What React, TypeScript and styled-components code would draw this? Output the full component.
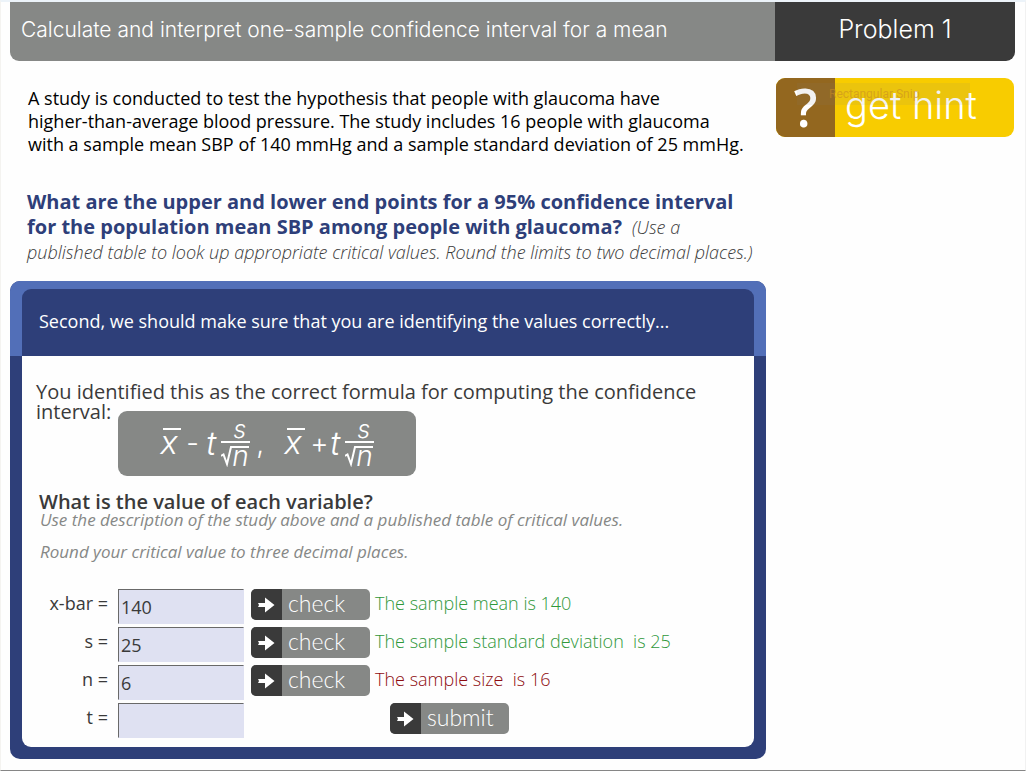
import React, { useState } from "react";
import styled, { createGlobalStyle } from "styled-components";

const GlobalStyle = createGlobalStyle`
  * { box-sizing: border-box; }
  body {
    margin: 0;
    background: #fefefe;
    font-family: "Open Sans", "Noto Sans", sans-serif;
    color: #3a3a3a;
  }
`;

const display = `"Inter", "Lato", sans-serif`;
const navy = "#2e3f79";
const grey = "#868886";
const charcoal = "#3a3a3a";

const Page = styled.main`
  border-top: 2px solid #ecf3f9;
  border-left: 1px solid #f4f3f0;
  border-right: 1px solid #f1f1f1;
  border-bottom: 1px solid #868686;
  padding: 0 10px 11px 9px;
`;

const Header = styled.header`
  display: flex;
  height: 59px;
  border-radius: 0 0 9px 9px;
  overflow: hidden;
  color: #fff;
  font-family: ${display};
  font-weight: 300;
  line-height: 55px;
`;

const Title = styled.h1`
  flex: 1;
  margin: 0;
  padding-left: 11px;
  background: ${grey};
  font-size: 21px;
  font-weight: 300;
  white-space: nowrap;
`;

const ProblemNumber = styled.div`
  width: 240px;
  background: ${charcoal};
  font-size: 25px;
  text-align: center;
`;

const Columns = styled.div`
  display: grid;
  grid-template-columns: 1fr 239px;
  column-gap: 10px;
  align-items: start;
  padding-top: 17px;
`;

const Study = styled.p`
  margin: 0;
  padding: 9px 0 0 18px;
  color: #000;
  font-size: 18px;
  line-height: 23px;
`;

const Question = styled.h2`
  margin: 33px 0 0;
  padding-left: 17px;
  color: ${navy};
  font-size: 20px;
  font-weight: 700;
  line-height: 25px;
`;

const Note = styled.em`
  color: ${charcoal};
  font-size: 18px;
  font-weight: 300;
  line-height: 20px;
`;

const Card = styled.section`
  margin-top: 17px;
  border-radius: 10px;
  overflow: hidden;
  background: ${navy};
`;

const CardTop = styled.div`
  padding: 8px 12px 0;
  background: #526fb8;
`;

const CardTitle = styled.h3`
  margin: 0;
  padding-left: 17px;
  border-radius: 9px 9px 0 0;
  background: ${navy};
  color: #fff;
  font-size: 18px;
  font-weight: 400;
  line-height: 65px;
  height: 67px;
`;

const CardBody = styled.div`
  margin: 0 12px 12px;
  padding: 26px 14px 9px;
  border-radius: 0 0 9px 9px;
  background: #fefefe;
`;

const FormulaIntro = styled.div`
  display: flex;
  flex-wrap: wrap;
  align-items: flex-start;
  column-gap: 7px;
  font-size: 20px;
  line-height: 20px;
`;

const IntroLine = styled.span`
  flex-basis: 100%;
`;

const FormulaBox = styled.div`
  display: flex;
  align-items: center;
  width: 298px;
  height: 65px;
  margin-top: 9px;
  padding: 0 0 2px 42px;
  border-radius: 9px;
  background: ${grey};
  color: #fff;
  font-family: ${display};
  font-style: italic;
  font-weight: 300;
  font-size: 33px;
  line-height: 32px;
`;

const Symbol = styled.span<{ $width: number; $upright?: boolean }>`
  width: ${(p) => p.$width}px;
  font-style: ${(p) => (p.$upright ? "normal" : "italic")};
  font-size: ${(p) => (p.$upright ? 28 : 33)}px;
`;

const Mean = styled.span`
  width: 26px;
  height: 34px;
  background: linear-gradient(#fff, #fff) 3px 2px / 18px 2px no-repeat;
`;

const Fraction = styled.span`
  display: flex;
  flex-direction: column;
  width: 29px;
  font-size: 25px;
  line-height: 20px;
`;

const Numerator = styled.span`
  height: 22px;
  padding-left: 12px;
  line-height: 20px;
`;

const Root = styled.span`
  display: flex;
  height: 25px;
  border-top: 2px solid #fff;
  font-size: 28px;
  line-height: 25px;
`;

const RootBody = styled.span`
  height: 20px;
  margin-top: 3px;
  border-top: 2px solid #fff;
  line-height: 16px;
`;

const SubHeading = styled.h4`
  margin: 16px 0 0;
  padding-left: 3px;
  font-size: 20px;
  font-weight: 600;
  line-height: 20px;
`;

const Instruction = styled.p`
  margin: 0 0 16px;
  padding-left: 4px;
  color: #868886;
  font-size: 17px;
  font-style: italic;
  line-height: 16px;
`;

const Form = styled.form`
  display: grid;
  row-gap: 3px;
  margin-top: 29px;
`;

const Row = styled.div`
  display: grid;
  grid-template-columns: 72px 126px 119px 1fr;
  align-items: start;
`;

const Label = styled.label`
  font-size: 18px;
  line-height: 29px;
  text-align: right;
`;

const Field = styled.input`
  width: 126px;
  height: 35px;
  margin-left: 10px;
  padding: 0 2px;
  border: 1px solid #dfe1f2;
  border-top-color: #696969;
  border-left-color: #696969;
  border-radius: 0;
  background: #dfe1f2;
  color: ${charcoal};
  font-family: inherit;
  font-size: 18px;
  outline: none;
`;

const ActionButton = styled.button<{ $indent?: number }>`
  display: flex;
  width: 119px;
  height: 31px;
  margin: 0 0 0 ${(p) => p.$indent ?? 17}px;
  padding: 0;
  border: 0;
  border-radius: 5px;
  overflow: hidden;
  background: ${grey};
  color: #fff;
  font-family: "Lato", sans-serif;
  font-weight: 300;
  font-size: 23px;
  line-height: 29px;
  cursor: pointer;
`;

const ArrowTile = styled.span`
  display: flex;
  align-items: center;
  justify-content: center;
  width: 31px;
  height: 31px;
  margin-right: 6px;
  background: ${charcoal};
`;

const Feedback = styled.output<{ $ok: boolean }>`
  padding-left: 22px;
  color: ${(p) => (p.$ok ? "#2f983a" : "#8e0c10")};
  font-size: 18px;
  font-weight: 300;
  line-height: 28px;
  white-space: pre;
`;

const HintArea = styled.aside`
  position: relative;
  padding-right: 1px;
`;

const HintButton = styled.button`
  display: flex;
  width: 100%;
  height: 59px;
  padding: 0;
  border: 0;
  border-radius: 9px;
  background: #f8cc00;
  color: #fff;
  font-family: ${display};
  font-weight: 300;
  font-size: 38px;
  line-height: 54px;
  cursor: pointer;
`;

const HintMark = styled.span`
  width: 59px;
  margin-right: 10px;
  border-radius: 9px 0 0 9px;
  background: #93671f;
  font-family: "Open Sans", sans-serif;
  font-size: 52px;
  font-weight: 600;
  line-height: 58px;
`;

const GhostTip = styled.span`
  position: absolute;
  left: 21px;
  top: 5px;
  width: 173px;
  height: 22px;
  padding-left: 32px;
  background: rgba(130, 130, 130, 0.1);
  color: rgba(200, 140, 35, 0.6);
  font-family: "Roboto", sans-serif;
  font-size: 12px;
  line-height: 22px;
  pointer-events: none;
`;

const Arrow = () => (
  <svg width="17" height="16" viewBox="0 0 17 16" fill="#fff" aria-hidden="true">
    <path d="M0 6h7V0.500l9.500 7.500L7 15.500V10H0l1-2z" />
  </svg>
);

const Radical = () => (
  <svg width="11" height="24" viewBox="0 0 11 24" fill="none" stroke="#fff" aria-hidden="true">
    <path d="M0 13l2.500-1.500L6 21L10 4H11" strokeWidth="2" />
  </svg>
);

const StandardError = () => (
  <Fraction>
    <Numerator>s</Numerator>
    <Root>
      <Radical />
      <RootBody>n</RootBody>
    </Root>
  </Fraction>
);

type Variable = { id: string; value: string; message?: string; ok?: boolean };

const variables: Variable[] = [
  { id: "x-bar", value: "140", message: "The sample mean is 140", ok: true },
  { id: "s", value: "25", message: "The sample standard deviation  is 25", ok: true },
  { id: "n", value: "6", message: "The sample size  is 16", ok: false },
  { id: "t", value: "" },
];

function VariableRow({ id, value, message, ok = false }: Variable) {
  const [entry, setEntry] = useState(value);
  return (
    <Row>
      <Label htmlFor={id}>{id} =</Label>
      <Field id={id} value={entry} onChange={(e) => setEntry(e.target.value)} />
      {message ? (
        <>
          <ActionButton type="button">
            <ArrowTile><Arrow /></ArrowTile>check
          </ActionButton>
          <Feedback htmlFor={id} $ok={ok}>{message}</Feedback>
        </>
      ) : (
        <ActionButton type="submit" $indent={156}>
          <ArrowTile><Arrow /></ArrowTile>submit
        </ActionButton>
      )}
    </Row>
  );
}

export default function App() {
  return (
    <>
      <GlobalStyle />
      <Page>
        <Header>
          <Title>Calculate and interpret one-sample confidence interval for a mean</Title>
          <ProblemNumber>Problem 1</ProblemNumber>
        </Header>
        <Columns>
          <div>
            <Study>
              A study is conducted to test the hypothesis that people with glaucoma have<br />
              higher-than-average blood pressure. The study includes 16 people with glaucoma<br />
              with a sample mean SBP of 140 mmHg and a sample standard deviation of 25 mmHg.
            </Study>
            <Question>
              What are the upper and lower end points for a 95% confidence interval<br />
              for the population mean SBP among people with glaucoma?{" "}
              <Note>
                &nbsp;(Use a<br />
                published table to look up appropriate critical values. Round the limits to two decimal places.)
              </Note>
            </Question>
            <Card>
              <CardTop>
                <CardTitle>Second, we should make sure that you are identifying the values correctly...</CardTitle>
              </CardTop>
              <CardBody>
                <FormulaIntro>
                  <IntroLine>You identified this as the correct formula for computing the confidence</IntroLine>
                  <span>interval:</span>
                  <FormulaBox>
                    <Mean>x</Mean>
                    <Symbol $width={20} $upright>-</Symbol>
                    <Symbol $width={15}>t</Symbol>
                    <StandardError />
                    <Symbol $width={6} />
                    <Symbol $width={28} $upright>,</Symbol>
                    <Mean>x</Mean>
                    <Symbol $width={20} $upright>+</Symbol>
                    <Symbol $width={15}>t</Symbol>
                    <StandardError />
                  </FormulaBox>
                </FormulaIntro>
                <SubHeading>What is the value of each variable?</SubHeading>
                <Instruction>Use the description of the study above and a published table of critical values.</Instruction>
                <Instruction>Round your critical value to three decimal places.</Instruction>
                <Form onSubmit={(e) => e.preventDefault()}>
                  {variables.map((v) => (
                    <VariableRow key={v.id} {...v} />
                  ))}
                </Form>
              </CardBody>
            </Card>
          </div>
          <HintArea>
            <HintButton type="button">
              <HintMark>?</HintMark>get hint
            </HintButton>
            <GhostTip>Rectangular Snip</GhostTip>
          </HintArea>
        </Columns>
      </Page>
    </>
  );
}
